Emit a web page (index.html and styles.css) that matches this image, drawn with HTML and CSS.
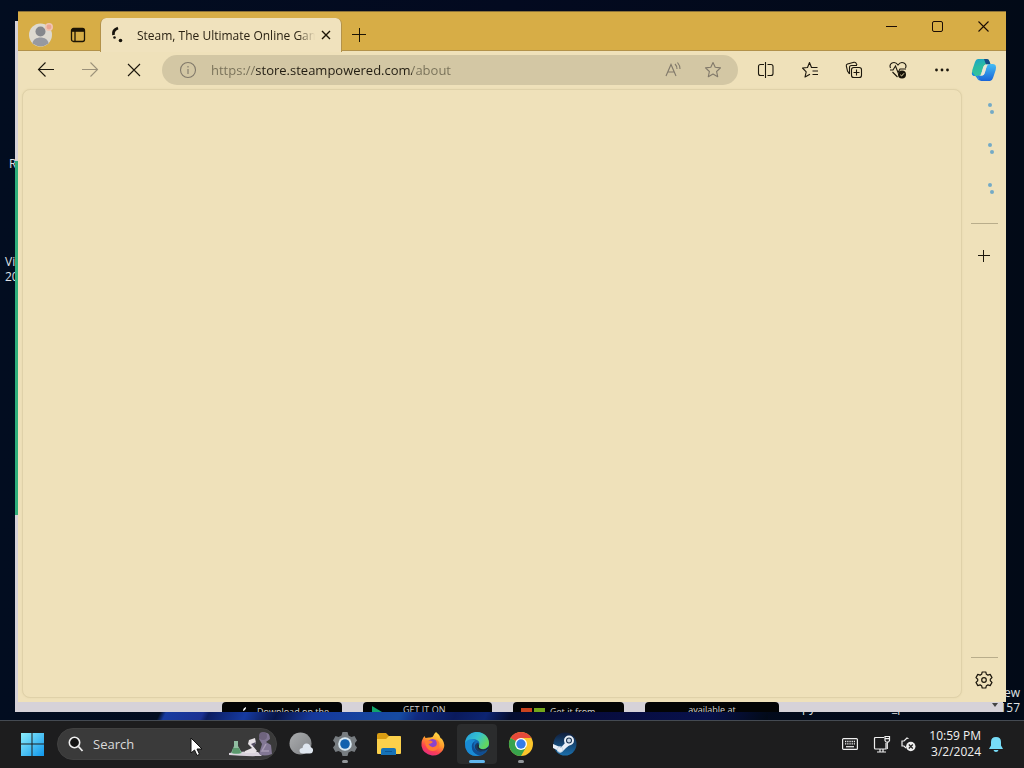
FILE: index.html
```html
<!DOCTYPE html>
<html lang="en">
<head>
<meta charset="utf-8">
<meta name="viewport" content="width=device-width, initial-scale=1">
<title>Steam, The Ultimate Online Game Platform</title>
<link rel="stylesheet" href="styles.css">
</head>
<body>
<div class="screen">
  <main class="desktop">
    <div class="wallpaper-glow"></div>
    <span class="shortcut shortcut-recycle">R</span>
    <span class="shortcut shortcut-studio">Vi<br>20</span>
    <span class="shortcut shortcut-a">py</span>
    <span class="shortcut shortcut-b">_p</span>
    <span class="watermark">ew<br>157</span>

    <section class="back-window" aria-label="Background window">
      <div class="green-edge"></div>
      <div class="badges">
        <div class="badge badge-apple"><svg class="badge-logo" viewBox="0 0 12 12"><path d="M6 9Q6 6 9 5Q9 8 6 9Z" fill="#fff"/></svg><span>Download on the</span></div>
        <div class="badge badge-play"><svg class="badge-logo" viewBox="0 0 12 12"><path d="M1 4L11 10L1 12Z" fill="#12a56c"/></svg><span class="raised">GET IT ON</span></div>
        <div class="badge badge-ms"><svg class="badge-logo wide" viewBox="0 0 24 12"><path d="M0 6H11V12H0Z" fill="#c9431f"/><path d="M13 6H24V12H13Z" fill="#73a71b"/></svg><span>Get it from</span></div>
        <div class="badge badge-amazon"><span class="raised">available at</span></div>
        <svg class="scroll-arrow" viewBox="0 0 8 6"><path d="M1 1H7L4 5Z" fill="#444"/></svg>
      </div>
    </section>

    <section class="browser" aria-label="Browser">
      <header class="tab-strip">
        <button class="icon-btn profile" aria-label="Profile">
          <svg width="26" height="26" viewBox="0 0 26 26"><circle cx="12.500" cy="13" r="11.500" fill="#ddd9d0"/><circle cx="12.500" cy="9.500" r="5" fill="#85878c"/><path d="M4.500 21.500C5 13.500 20 13.500 20.500 21.500Q13 27 4.500 21.500Z" fill="#9799a0"/><circle cx="21" cy="5" r="4" fill="#f0c5b2"/><circle cx="21" cy="5" r="2.400" fill="#eaa593"/></svg>
        </button>
        <button class="icon-btn tab-actions" aria-label="Tab actions menu">
          <svg width="16" height="16" viewBox="0 0 16 16" fill="none" stroke="#1c1405" stroke-width="1.300"><rect x="1.500" y="1.500" width="13" height="13" rx="2"/><path d="M2 3.300H14" stroke-width="3"/><path d="M5 4V14"/></svg>
        </button>
        <div class="tab">
          <svg class="spinner" width="16" height="20" viewBox="0 0 16 20"><path d="M9 3Q3.500 5 4.500 10" fill="none" stroke="#17130b" stroke-width="2.800"/><circle cx="5.500" cy="12.500" r="1.300" fill="#17130b"/><circle cx="11.500" cy="15.500" r="1.800" fill="#17130b"/></svg>
          <a class="tab-title" href="#page">Steam, The Ultimate Online Game Platform</a>
          <button class="tab-close" aria-label="Close tab"><svg width="10" height="10" viewBox="0 0 10 10"><path d="M1 1L9 9M9 1L1 9" stroke="#1c1405" stroke-width="1.400"/></svg></button>
        </div>
        <button class="icon-btn new-tab" aria-label="New tab"><svg width="14" height="14" viewBox="0 0 14 14"><path d="M7.500 0V14M0 6.500H14" stroke="#1c1405"/></svg></button>
        <div class="window-controls">
          <button class="control" aria-label="Minimize"><svg width="11" height="11" viewBox="0 0 11 11"><path d="M0 5.500H11" stroke="#1c0d05"/></svg></button>
          <button class="control" aria-label="Maximize"><svg width="11" height="11" viewBox="0 0 11 11"><rect x=".5" y=".5" width="10" height="10" rx="1.500" fill="none" stroke="#1c0d05"/></svg></button>
          <button class="control" aria-label="Close"><svg width="11" height="11" viewBox="0 0 11 11"><path d="M.5 .5L10.500 10.500M10.500 .5L.5 10.500" stroke="#1c0d05" stroke-width="1.100"/></svg></button>
        </div>
      </header>

      <nav class="toolbar" aria-label="Browser toolbar">
        <button class="tool" aria-label="Back"><svg width="18" height="18" viewBox="0 0 18 18"><path d="M17 8.500H1.500M8.500 1.500L1.500 8.500L8.500 15.500"/></svg></button>
        <button class="tool faded" aria-label="Forward"><svg width="18" height="18" viewBox="0 0 18 18"><path d="M1 8.500H16.500M9.500 1.500L16.500 8.500L9.500 15.500"/></svg></button>
        <button class="tool" aria-label="Stop"><svg width="18" height="18" viewBox="0 0 18 18"><path d="M3 3L15 15M15 3L3 15"/></svg></button>
        <div class="address">
          <button class="site-info" aria-label="Site information"><svg width="18" height="18" viewBox="0 0 18 18"><circle cx="9" cy="9" r="7.500"/><path d="M9 8V13M9 5V6.500"/></svg></button>
          <input class="url" type="text" aria-label="Address" value="https://store.steampowered.com/about">
          <button class="address-btn" aria-label="Read aloud"><svg width="18" height="18" viewBox="0 0 18 18"><path d="M2 15L7 3.500L12 15M4 11H10M11 3Q13 5 13 8M13.500 1.500Q16 4.500 16 8"/></svg></button>
          <button class="address-btn" aria-label="Add to favorites"><svg width="18" height="18" viewBox="0 0 18 18"><path d="M9 1.500L11.200 6.300L16.500 6.900L12.600 10.500L13.700 15.700L9 13.100L4.300 15.700L5.400 10.500L1.500 6.900L6.800 6.300Z" stroke-linejoin="round"/></svg></button>
        </div>
        <button class="tool" aria-label="Split screen"><svg width="18" height="18" viewBox="0 0 18 18"><path d="M8.500 1V17M7 3.500H3.500Q1.500 3.500 1.500 5.500V12.500Q1.500 14.500 3.500 14.500H7M10.500 3.500H14Q16 3.500 16 5.500V12.500Q16 14.500 14 14.500H10.500"/></svg></button>
        <button class="tool" aria-label="Favorites"><svg width="18" height="18" viewBox="0 0 18 18"><path d="M16.500 6.500H10.500L8.500 1.500L6.500 6.500L1.500 7L5.200 10.800L4 16L9 13.300M11.500 10H17M11.500 13.500H17" stroke-linejoin="round"/></svg></button>
        <button class="tool" aria-label="Collections"><svg width="18" height="18" viewBox="0 0 18 18"><rect x="6.500" y="6.500" width="10" height="10" rx="2.300"/><path d="M11.500 8.500V14.500M8.500 11.500H14.500M4.500 13L2.500 10L1.300 5Q1 3.500 2.500 3L9 1.300Q10.800 1 11.500 3L12 4M4.500 13V6.500Q4.500 4.500 6.500 4.500H12"/></svg></button>
        <button class="tool" aria-label="Browser essentials"><svg width="20" height="18" viewBox="0 0 20 18"><path d="M2.500 7Q1 3.500 4 2Q7.500 .5 10 4Q12.500 .5 16 2Q19 3.500 17.500 7M2 9H5L7.500 5L10 11.500L12 8H18M4.500 11L9.500 16"/><circle cx="14" cy="13.500" r="4" fill="#171208" stroke="none"/><path d="M12.300 13.800L13.600 15L16 12.300" stroke="#e8dcae" stroke-width="1"/></svg></button>
        <button class="tool" aria-label="Settings and more"><svg width="18" height="18" viewBox="0 0 18 18"><g fill="#1c170d" stroke="none"><circle cx="3.500" cy="9" r="1.400"/><circle cx="9" cy="9" r="1.400"/><circle cx="14.500" cy="9" r="1.400"/></g></svg></button>
        <button class="copilot" aria-label="Copilot">
          <svg width="26" height="24" viewBox="0 0 26 24"><defs><linearGradient id="cpA" x1="0" y1="0" x2=".4" y2="1"><stop offset="0" stop-color="#189fd0"/><stop offset=".5" stop-color="#2abaa4"/><stop offset="1" stop-color="#36c39a"/></linearGradient><linearGradient id="cpB" x1="0" y1="0" x2="0" y2="1"><stop offset="0" stop-color="#45bdf5"/><stop offset="1" stop-color="#1964d8"/></linearGradient></defs><path d="M7 1H16Q18 1 18.700 4L19.500 6.500H15Q13 6.500 12 10L10.200 16Q9.500 18 7 18H4Q0 18 1.300 12L4 4Q5 1 7 1Z" fill="url(#cpA)"/><path d="M13 1H16Q18 1 18.700 4L19.500 6.500H15Z" fill="#174a86"/><path d="M1 14Q0 18 4 18H6.700L8 21.500Q8.500 23 11 23Q7 23 6 20Z" fill="#1686e5"/><path d="M19 23H10Q8 23 7.300 20L6.500 17.500H11Q13 17.500 14 14L15.800 8Q16.500 6 19 6H22Q26 6 24.700 12L22 20Q21 23 19 23Z" fill="url(#cpB)"/><path d="M15 6.500H18Q16.500 6.500 15.800 8L14 14Q13 17.500 11 17.500H8.500Q9.800 17.500 10.200 16L12 10Q13 6.500 15 6.500Z" fill="#e9e6d6"/></svg>
        </button>
      </nav>

      <div class="content">
        <div class="page" id="page"></div>
        <aside class="sidebar" aria-label="Sidebar">
          <button class="side-item" aria-label="Loading app"><i class="dots"></i></button>
          <button class="side-item" aria-label="Loading app"><i class="dots"></i></button>
          <button class="side-item" aria-label="Loading app"><i class="dots"></i></button>
          <hr class="side-rule first">
          <button class="side-add" aria-label="Customize sidebar"><svg width="12" height="12" viewBox="0 0 12 12"><path d="M5.500 0V12M0 5.500H12" stroke="#1c170d"/></svg></button>
          <hr class="side-rule last">
          <button class="side-settings" aria-label="Sidebar settings"><svg width="18" height="18" viewBox="0 0 18 18" fill="none" stroke="#1c170d" stroke-width="1.200" stroke-linejoin="round"><path d="M7.200 1H10.800L11.400 3.300L12.900 4.100L15.200 3.400L17 6.600L15.300 8.200V9.800L17 11.400L15.200 14.600L12.900 13.900L11.400 14.700L10.800 17H7.200L6.600 14.700L5.100 13.900L2.800 14.600L1 11.400L2.700 9.800V8.200L1 6.600L2.800 3.400L5.100 4.100L6.600 3.300Z"/><circle cx="9" cy="9" r="2.300"/></svg></button>
        </aside>
      </div>
    </section>
  </main>

  <footer class="taskbar">
    <button class="start" aria-label="Start"><svg width="24" height="24" viewBox="0 0 24 24"><defs><linearGradient id="win" x1="0" y1="0" x2="1" y2="1"><stop offset="0" stop-color="#8ceefc"/><stop offset="1" stop-color="#0f96ec"/></linearGradient></defs><path d="M1 1H11.500V11.500H1ZM12.500 1H24V11.500H12.500ZM1 12.500H11.500V24H1ZM12.500 12.500H24V24H12.500Z" fill="url(#win)"/></svg></button>
    <label class="search">
      <svg width="16" height="16" viewBox="0 0 16 16"><circle cx="6.500" cy="6.500" r="5.200" fill="#141414" stroke="#eee" stroke-width="1.600"/><path d="M10.500 10.500L14.500 15" stroke="#eee" stroke-width="1.800"/></svg>
      <input class="search-input" type="text" placeholder="Search" aria-label="Search">
      <svg class="search-art" width="46" height="26" viewBox="0 0 46 26"><path d="M1 22Q14 19.500 30 21L34 25Q15 25.500 1 24Z" fill="#d9d3dc"/><path d="M6 10H10V15L14 22Q8 24 3 22L6 15Z" fill="#91bda1"/><path d="M5 17H11L13 22Q8 23 4 22Z" fill="#5b986d"/><path d="M17 20L24 17L20 13L21 9L27 7L28 12L25 15L29 20L27 22H17Z" fill="#e6e1e5"/><path d="M23 13L28 11L26 16Z" fill="#555064"/><path d="M34 2Q42 0 42 8L38 11L43 14L44 23Q36 26 31 23L34 13L31 8Z" fill="#827794"/><circle cx="35" cy="5" r="4" fill="#6f647e"/><path d="M38 13L34 20H41" fill="none" stroke="#a69ab3" stroke-width="1.500"/></svg>
    </label>
    <div class="apps">
      <button class="app" aria-label="Weather"><svg width="26" height="26" viewBox="0 0 26 26"><defs><linearGradient id="moon" x1="0" y1="0" x2="1" y2="1"><stop offset="0" stop-color="#aaacae"/><stop offset="1" stop-color="#808285"/></linearGradient></defs><circle cx="12.500" cy="12.500" r="11" fill="url(#moon)"/><path d="M15 22.500Q11.500 22.500 11.500 19.500Q11.500 17 14.500 17Q15 12.500 18.500 12.500Q22 12.500 22.500 16Q25.500 17 25 20Q24.500 22.500 22 22.500Z" fill="#dfe6ef"/></svg></button>
      <button class="app running" aria-label="Settings"><svg width="26" height="26" viewBox="0 0 26 26"><path d="M10.500 1H15.500L16.500 4.500L19.500 6L22.500 5L25 9.500L23 12V14L25 16.500L22.500 21L19.500 20L16.500 21.500L15.500 25H10.500L9.500 21.500L6.500 20L3.500 21L1 16.500L3 14V12L1 9.500L3.500 5L6.500 6L9.500 4.500Z" fill="#777c80"/><circle cx="13" cy="13" r="6.800" fill="#d8e8f2"/><circle cx="13" cy="13" r="4.800" fill="#1161ae"/></svg></button>
      <button class="app" aria-label="File Explorer"><svg width="26" height="26" viewBox="0 0 26 26"><path d="M1 4Q1 2 3 2H10L13 5H23Q25 5 25 7V10H1Z" fill="#d99d13"/><path d="M1 8H10L13 5H24Q25 5 25 6V22Q25 23 24 23H2Q1 23 1 22Z" fill="#fbd04b"/><path d="M5 24V19Q5 17 7 17H18Q20 17 20 19V24Z" fill="#1672b7"/><path d="M9 20.500H16" stroke="#0c5695"/></svg></button>
      <button class="app" aria-label="Firefox"><svg width="26" height="26" viewBox="0 0 26 26"><defs><linearGradient id="fx" x1=".8" y1="0" x2=".3" y2="1"><stop offset="0" stop-color="#ffe34a"/><stop offset=".45" stop-color="#ff9b2b"/><stop offset=".75" stop-color="#fb4051"/><stop offset="1" stop-color="#e22b84"/></linearGradient></defs><path d="M16 1Q19 3 20.500 7L22 8Q26 14 23 19Q19 25 12 24.500Q3 23 1.500 15Q1 9 4.500 5L5.500 7L9 6.500Q13 7 13.500 4.500Q14 2.500 16 1Z" fill="url(#fx)"/><circle cx="12.500" cy="13.500" r="5.500" fill="#8b43cd"/><path d="M5 10Q10 8 13 11Q11 13 8.500 13Q11 18 16 15Q18 12 15 8Q21 10 19 16Q15 22 9 19Q5 16 5 10Z" fill="#ff7b32"/></svg></button>
      <button class="app running active" aria-label="Microsoft Edge"><svg width="26" height="26" viewBox="0 0 26 26"><defs><linearGradient id="edA" x1="0" y1="0" x2="1" y2=".5"><stop offset="0" stop-color="#249cdd"/><stop offset=".55" stop-color="#35c1cf"/><stop offset="1" stop-color="#63d65e"/></linearGradient></defs><circle cx="13" cy="13" r="12" fill="#126cb9"/><path d="M1 12C2 3 9 1 13 1C20 1 25 6 25 12C25 16 22 18 18 18C15 18 14 16.500 15 14.500C17 10 12 7.500 8 8.500C4 9.500 1.500 12 1 12Z" fill="url(#edA)"/><path d="M1 12Q4 7 9 8.500Q11 9 11.500 10Q7 12 8 17Q9 23 16 24.600Q5 27 1.500 17Z" fill="#198bd5"/><path d="M11.500 10Q9 12 9.500 15Q11 21 18 21L23 19Q20 24 15 24.500Q8 22 8 17Q7 12 11.500 10Z" fill="#104d91"/><path d="M14.500 14.500Q13 17 17 18.700Q21 20 25 15L23.300 19Q14 24 11 17Q10 13 14 11.500Q15.500 13 14.500 14.500Z" fill="#173c68"/><path d="M15 14.500Q14 16.500 17 18Q21 19.500 25 15.500L24 18Q20 20 16 19Q12 17 14 13Z" fill="#25272a"/></svg></button>
      <button class="app running" aria-label="Google Chrome"><svg width="26" height="26" viewBox="0 0 26 26"><circle cx="13" cy="13" r="12" fill="#fbc52b"/><path d="M13 13L2.600 7A12 12 0 0 1 23.400 7H13Z" fill="#e6493a"/><path d="M13 13L2.600 7A12 12 0 0 0 13 25L18.200 16Z" fill="#38a34c"/><circle cx="13" cy="13" r="6" fill="#fff"/><circle cx="13" cy="13" r="4.700" fill="#347ce8"/></svg></button>
      <button class="app" aria-label="Steam"><svg width="26" height="26" viewBox="0 0 26 26"><defs><linearGradient id="st" x1="0" y1="0" x2="0" y2="1"><stop offset="0" stop-color="#101d3b"/><stop offset="1" stop-color="#1b6eaa"/></linearGradient></defs><circle cx="13" cy="13" r="11.500" fill="url(#st)"/><path d="M1 13L9 16.500L13 12L20 12L14 17L11 20Q8 23 5 19L1 17Z" fill="#e9eff7"/><circle cx="17" cy="9.500" r="4" fill="#17304e" stroke="#e9eff7" stroke-width="2"/><circle cx="17" cy="9.500" r="2" fill="#c8d5e3"/><circle cx="8" cy="18.500" r="2.800" fill="none" stroke="#c9d9e7"/></svg></button>
    </div>
    <div class="tray">
      <button class="tray-btn keyboard" aria-label="Touch keyboard"><svg width="16" height="12" viewBox="0 0 16 12"><rect x=".6" y=".6" width="14.800" height="10.800" rx="1" fill="none" stroke="#eee" stroke-width="1.200"/><path d="M3 3.500H13M3 5.800H13" stroke="#eee" stroke-width="1.300" stroke-dasharray="1.300 .9"/><path d="M4 8.700H12" stroke="#eee" stroke-width="1.200"/></svg></button>
      <button class="tray-btn network" aria-label="Network"><svg width="18" height="18" viewBox="0 0 18 18" fill="none" stroke="#eee" stroke-width="1.200"><path d="M11 2.500H2.500Q1.500 2.500 1.500 3.500V13Q1.500 14 2.500 14H13V8M7 14V17M10 14V17M4 17H13"/><path d="M12 1.500H16.500V5.500L15.500 7H13L12 5.500ZM14.300 7V14M12 3.700H16.500"/></svg></button>
      <button class="tray-btn volume" aria-label="Volume muted"><svg width="17" height="18" viewBox="0 0 17 18"><path d="M8 4V3.500L7 3L4 6H2V11H4L6 13" fill="none" stroke="#eee" stroke-width="1.200"/><circle cx="10.800" cy="11.500" r="4.700" fill="#eee"/><path d="M8.800 9.500L12.800 13.500M12.800 9.500L8.800 13.500" stroke="#202020" stroke-width="1.200"/></svg></button>
      <button class="clock"><time datetime="2024-03-02T22:59">10:59 PM<br>3/2/2024</time></button>
      <button class="tray-btn bell" aria-label="Notifications"><svg width="14" height="17" viewBox="0 0 14 17"><path d="M7 1Q12 1 12 6V9.500L13.800 12.500V13H.2V12.500L2 9.500V6Q2 1 7 1ZM4.500 14H9.500Q9 16 7 16Q5 16 4.500 14Z" fill="#77dcf7"/></svg></button>
    </div>
  </footer>
  <svg class="cursor" width="13" height="20" viewBox="0 0 13 20"><path d="M1 1V16L4.500 13L7 18.500L9.500 17.300L7 12H12Z" fill="#fff" stroke="#111"/></svg>
</div>
</body>
</html>
```
FILE: styles.css
```css
* { box-sizing: border-box; }

body {
  margin: 0;
  font-family: "Open Sans", "Noto Sans", sans-serif;
  font-size: 12px;
  color: #221b0d;
}

button {
  display: flex;
  align-items: center;
  justify-content: center;
  padding: 0;
  border: 0;
  background: none;
  color: inherit;
  font: inherit;
}

svg { display: block; flex: none; }

.screen {
  position: relative;
  display: flex;
  flex-direction: column;
  min-height: 100vh;
  background: #020a1b;
}

.desktop {
  position: relative;
  flex: 1;
  overflow: hidden;
  background: linear-gradient(90deg, #020d20, #030a20 50%, #020a17);
}

.wallpaper-glow {
  position: absolute;
  bottom: 0;
  left: 15%;
  width: 60%;
  height: 8px;
  background: linear-gradient(115deg, #020d20 1%, #173ba0 2%, #1b3092 8%, #0b1c60 9%, #163aa0 15%, #08154a 20%, #15389b 26%, #164ba2 40%, #10297e 43%, #0a1a5c 49%, #0d2471 54%, #050d30 58%, #070c3e 72%, #08114b 90%, #020a17 100%);
}

.shortcut, .watermark {
  position: absolute;
  color: #dfe2e6;
  line-height: 15px;
}
.shortcut-recycle { left: 9px; top: 156px; }
.shortcut-studio { left: 5px; top: 254px; }
.shortcut-a { left: 802px; bottom: 5px; }
.shortcut-b { left: 892px; bottom: 5px; }
.watermark { right: 4px; bottom: 5px; text-align: right; }

.back-window {
  position: absolute;
  inset: 21px 21px 8px 15px;
  display: flex;
  align-items: flex-end;
  overflow: hidden;
  background: #d6d2d8;
}
.green-edge {
  position: absolute;
  left: 0;
  top: 140px;
  width: 3px;
  height: 354px;
  background: #2fae7b;
}

.badges {
  display: flex;
  flex: 1;
  height: 10px;
  padding-left: 207px;
  overflow: hidden;
}
.badge {
  display: flex;
  gap: 8px;
  height: 36px;
  padding: 0 8px;
  border-radius: 4px;
  background: #030405;
  color: #d6d6d6;
  font-size: 9px;
  line-height: 20px;
  white-space: nowrap;
}
.badge-apple { width: 120px; margin-right: 21px; padding-left: 15px; }
.badge-play { width: 129px; margin-right: 21px; }
.badge-play .raised { margin-left: 12px; }
.badge-ms { width: 111px; margin-right: 21px; gap: 5px; }
.badge-amazon { width: 134px; justify-content: center; }
.raised { line-height: 16px; }
.badge-logo { width: 12px; height: 12px; }
.badge-logo.wide { width: 24px; }
.scroll-arrow { width: 8px; height: 6px; margin-left: auto; margin-right: 4px; }

.browser {
  position: absolute;
  inset: 11px 18px 18px;
  display: flex;
  flex-direction: column;
  background: #efe1ba;
}

.tab-strip {
  display: flex;
  height: 40px;
  padding-left: 4px;
  border-top: 1px solid #8b723a;
  border-bottom: 1px solid #b3924a;
  background: #d7ad46;
}
.icon-btn { height: 46px; }
.profile { width: 38px; }
.tab-actions { width: 36px; }
.new-tab { width: 34px; }

.tab {
  display: flex;
  align-items: center;
  width: 242px;
  height: 34px;
  margin: 6px 0 0 4px;
  padding: 0 6px 0 8px;
  border: 1px solid #b3924a;
  border-width: 0 1px;
  border-radius: 6px 6px 0 0;
  background: #f0e2bd;
}
.tab-title {
  flex: 1;
  margin: 0 2px 0 12px;
  overflow: hidden;
  color: #2a2213;
  text-decoration: none;
  white-space: nowrap;
  -webkit-mask-image: linear-gradient(90deg, #000 90%, transparent);
  mask-image: linear-gradient(90deg, #000 90%, transparent);
}
.tab-close { width: 18px; height: 18px; }

.window-controls { display: flex; margin-left: auto; }
.control { width: 46px; height: 28px; }

.toolbar {
  display: flex;
  align-items: center;
  height: 38px;
  padding: 0 2px 0 6px;
}
.tool { width: 44px; height: 30px; }
.tool svg, .address svg {
  fill: none;
  stroke: #1c170d;
  stroke-width: 1.1px;
}
.faded svg { stroke: #9b917a; }
.copilot { width: 40px; height: 30px; }

.address {
  display: flex;
  flex: 1;
  align-items: center;
  min-width: 0;
  height: 30px;
  margin: 0 6px;
  padding: 0 5px 0 12px;
  border-radius: 15px;
  background: #d3c7a4;
}
.address svg { stroke: #81796a; }
.site-info { width: 28px; height: 28px; }
.url {
  flex: 1;
  min-width: 0;
  height: 28px;
  margin-left: 9px;
  padding: 0;
  border: 0;
  outline: 0;
  background: linear-gradient(90deg, #777058 45px, #221d12 45px, #221d12 201px, #777058 201px);
  -webkit-background-clip: text;
  background-clip: text;
  color: transparent;
  font: inherit;
  font-size: 13px;
}
.address-btn { width: 40px; height: 28px; }

.content {
  display: flex;
  flex: 1;
  padding: 0 0 4px 4px;
}
.page {
  flex: 1;
  border: 1px solid #dfd1a9;
  border-radius: 8px;
  background: #efe1ba;
  box-shadow: 0 0 2px #e3d4aa;
}
.sidebar {
  display: flex;
  flex-direction: column;
  align-items: center;
  width: 44px;
}
.side-item { width: 40px; height: 40px; }
.dots {
  width: 4px;
  height: 4px;
  margin: 0 0 8px 12px;
  border-radius: 50%;
  background: #74aac6;
  box-shadow: 2px 7px #74aac6;
}
.side-rule {
  width: 27px;
  margin: 0;
  border: 0;
  border-top: 1px solid #b9ad8b;
}
.first { margin-top: 14px; }
.last { margin-top: auto; }
.side-add { width: 32px; height: 32px; margin-top: 16px; }
.side-settings { width: 32px; height: 32px; margin: 6px 0 2px; }

.taskbar {
  display: flex;
  align-items: center;
  height: 48px;
  padding: 0 21px 1px 12px;
  border-top: 1px solid #444a52;
  background: #1d1d1e;
  color: #f1f1f1;
}
.start { width: 40px; height: 40px; }
.search {
  display: flex;
  align-items: center;
  width: 220px;
  height: 32px;
  margin-left: 5px;
  padding: 0 2px 0 10px;
  border: 1px solid #414141;
  border-radius: 16px;
  background: #3a3a3a;
}
.search-input {
  flex: 1;
  min-width: 0;
  margin-left: 9px;
  padding: 0;
  border: 0;
  outline: 0;
  background: none;
  color: #e0e0e0;
  font: inherit;
  font-size: 13px;
}
.search-input::placeholder { color: #dadada; opacity: 1; }

.apps { display: flex; gap: 4px; margin-left: 4px; }
.app {
  position: relative;
  width: 40px;
  height: 40px;
  border-radius: 4px;
}
.active { background: #2b2c2d; }
.running::after {
  content: "";
  position: absolute;
  bottom: 1px;
  left: 50%;
  width: 6px;
  height: 3px;
  margin-left: -3px;
  border-radius: 2px;
  background: #92969a;
}
.active::after { width: 16px; margin-left: -8px; background: #61b6ed; }

.tray {
  display: flex;
  align-items: center;
  margin-left: auto;
}
.tray-btn { height: 32px; }
.keyboard { width: 32px; }
.network { width: 32px; }
.volume { width: 20px; }
.clock {
  margin-left: 11px;
  line-height: 16px;
  text-align: right;
}
.bell { width: 14px; margin-left: 8px; }

.cursor {
  position: absolute;
  left: 190px;
  bottom: 11px;
}
```
